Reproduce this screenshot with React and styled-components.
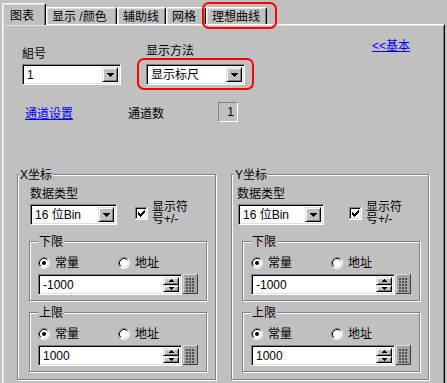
import React from 'react';
import styled, { createGlobalStyle } from 'styled-components';

const GlobalStyle = createGlobalStyle`
  html, body { margin: 0; padding: 0; background: #c0c0c0; }
  body {
    font-family: "Liberation Sans", "Noto Sans CJK SC", sans-serif;
    font-size: 12px;
    color: #000;
  }
`;

const Screen = styled.div`
  box-sizing: border-box;
  width: 447px;
  height: 383px;
  overflow: hidden;
  background: #c0c0c0;
  padding: 3px 0 0 2px;
`;

const TabStrip = styled.div`
  display: flex;
  align-items: flex-end;
  height: 21px;
  position: relative;
  z-index: 1;
`;

const Tab = styled.div`
  position: relative;
  box-sizing: border-box;
  flex: none;
  width: ${p => p.$w}px;
  height: ${p => (p.$active ? 22 : 17)}px;
  margin-bottom: ${p => (p.$active ? -1 : 0)}px;
  padding: ${p => (p.$active ? '5px 0 0 7px' : '2px 0 0 5px')};
  background: #c0c0c0;
  border: 1px solid #fff;
  border-bottom: none;
  border-right-color: #000;
  border-radius: 2px 2px 0 0;
  box-shadow: inset 1px 1px 0 #dfdfdf, inset -1px 0 0 #808080;
  line-height: 14px;
  white-space: nowrap;
`;

const RedMark = styled.div`
  position: absolute;
  top: ${p => p.$t}px;
  left: ${p => p.$l}px;
  right: ${p => p.$r}px;
  bottom: ${p => p.$b}px;
  border: 2px solid #ff0000;
  border-radius: 7px;
  pointer-events: none;
`;

const Panel = styled.div`
  box-sizing: border-box;
  width: 443px;
  height: 380px;
  border-top: 1px solid #fff;
  border-left: 1px solid #fff;
  border-right: 1px solid #000;
  box-shadow: inset 1px 1px 0 #dfdfdf, inset -1px 0 0 #808080;
`;

const TopRow = styled.div`
  display: grid;
  grid-template-columns: 124px 226px auto;
  align-items: start;
  padding-left: 19px;
`;

const Column = styled.div`
  display: flex;
  flex-direction: column;
  align-items: flex-start;
  margin-top: ${p => p.$top}px;
  gap: ${p => p.$gap}px;
`;

const Label = styled.div`
  line-height: 14px;
  white-space: nowrap;
`;

const LinkText = styled.a`
  color: #0000ff;
  text-decoration: underline;
  line-height: 14px;
  margin-top: ${p => p.$top || 0}px;
  white-space: nowrap;
  cursor: pointer;
`;

const ChannelRow = styled.div`
  display: grid;
  grid-template-columns: 103px 90px 20px;
  align-items: start;
  padding-left: 22px;
  margin-top: 17px;
`;

const TextCell = styled.div`
  margin-top: 5px;
  line-height: 14px;
`;

const CountBox = styled.div`
  box-sizing: border-box;
  width: 20px;
  height: 20px;
  border: 1px solid;
  border-color: #808080 #fff #fff #808080;
  text-align: right;
  padding-right: 3px;
  line-height: 18px;
`;

const Field = styled.div`
  position: relative;
  box-sizing: border-box;
  display: flex;
  width: ${p => p.$w}px;
  height: 21px;
  background: #fff;
  border: 1px solid;
  border-color: #808080 #fff #fff #808080;
  box-shadow: inset 1px 1px 0 #000, inset -1px -1px 0 #dfdfdf;
  padding: 2px;
  margin-left: ${p => p.$shift || 0}px;
`;

const FieldText = styled.div`
  flex: 1;
  padding-left: 2px;
  line-height: 17px;
  white-space: nowrap;
  overflow: hidden;
`;

const RaisedBtn = styled.div`
  box-sizing: border-box;
  flex: none;
  width: 16px;
  background: #c0c0c0;
  border: 1px solid;
  border-color: #dfdfdf #000 #000 #dfdfdf;
  box-shadow: inset 1px 1px 0 #fff, inset -1px -1px 0 #808080;
  display: flex;
  align-items: center;
  justify-content: center;
`;

const SpinCol = styled.div`
  display: flex;
  flex-direction: column;
  width: 16px;
  & > div { flex: 1; width: 16px; }
`;

const GroupsRow = styled.div`
  display: flex;
  align-items: flex-start;
  gap: 15px;
  padding-left: 14px;
  margin-top: 52px;
`;

const GroupBox = styled.div`
  position: relative;
  box-sizing: border-box;
  width: ${p => p.$w}px;
  margin: ${p => p.$mt || 0}px 0 0 ${p => p.$shift || 0}px;
  padding: ${p => p.$pad};
  border: 1px solid #808080;
  box-shadow: inset 1px 1px 0 #fff, 1px 1px 0 #fff;
`;

const Legend = styled.div`
  position: absolute;
  top: -7px;
  left: ${p => p.$left}px;
  padding: 2px 1px 0;
  line-height: 11px;
  background: #c0c0c0;
  white-space: nowrap;
`;

const TypeRow = styled.div`
  display: flex;
  align-items: flex-end;
`;

const CheckWrap = styled.div`
  display: flex;
  align-items: center;
  gap: 4px;
  margin-left: ${p => p.$gap}px;
`;

const CheckLabel = styled.div`
  line-height: 12px;
`;

const RadioRow = styled.div`
  display: grid;
  grid-template-columns: 80px auto;
  height: 12px;
  margin-bottom: 5px;
`;

const RadioItem = styled.div`
  display: flex;
  align-items: center;
  gap: 5px;
  line-height: 12px;
`;

const InputRow = styled.div`
  display: flex;
  gap: 1px;
`;

const DropArrow = () => (
  <svg width="7" height="4" shapeRendering="crispEdges">
    <path d="M0 0h7v1H0z M1 1h5v1H1z M2 2h3v1H2z M3 3h1v1H3z" fill="#000" />
  </svg>
);

const SmallArrow = ({ up }) => (
  <svg width="5" height="3" shapeRendering="crispEdges">
    {up ? (
      <path d="M2 0h1v1H2z M1 1h3v1H1z M0 2h5v1H0z" fill="#000" />
    ) : (
      <path d="M0 0h5v1H0z M1 1h3v1H1z M2 2h1v1H2z" fill="#000" />
    )}
  </svg>
);

const CheckBox = () => (
  <svg width="13" height="13" shapeRendering="crispEdges">
    <rect x="0" y="0" width="13" height="13" fill="#fff" />
    <path d="M0 0h12v1H1v11H0z" fill="#808080" />
    <path d="M1 1h10v1H2v9H1z" fill="#000" />
    <path d="M12 0h1v13H0v-1h12z" fill="#fff" />
    <path d="M11 1h1v11H1v-1h10z" fill="#dfdfdf" />
    <g transform="translate(3 3)">
      <path
        d="M6 0h1v1H6z M5 1h2v1H5z M0 2h1v1H0z M4 2h3v1H4z M0 3h2v1H0z M3 3h3v1H3z M0 4h5v1H0z M1 5h3v1H1z M2 6h1v1H2z"
        fill="#000"
      />
    </g>
  </svg>
);

const Radio = ({ checked }) => (
  <svg width="12" height="12">
    <circle cx="6" cy="6" r="5" fill="#fff" />
    <path d="M2.11 9.89 A5.5 5.5 0 0 1 9.89 2.11" stroke="#808080" fill="none" />
    <path d="M9.89 2.11 A5.5 5.5 0 0 1 2.11 9.89" stroke="#fff" fill="none" />
    <path d="M2.82 9.18 A4.5 4.5 0 0 1 9.18 2.82" stroke="#000" fill="none" />
    <path d="M9.18 2.82 A4.5 4.5 0 0 1 2.82 9.18" stroke="#dfdfdf" fill="none" />
    {checked && <circle cx="6" cy="6" r="2" fill="#000" />}
  </svg>
);

const CalcIcon = () => (
  <svg width="15" height="20" shapeRendering="crispEdges">
    <rect x="0" y="0" width="15" height="20" fill="#a4a4a4" />
    <rect x="0" y="0" width="1" height="20" fill="#c8c8e8" />
    <rect x="0" y="0" width="15" height="1" fill="#d8d8e8" />
    <rect x="14" y="0" width="1" height="20" fill="#404040" />
    <rect x="0" y="19" width="15" height="1" fill="#404040" />
    {[0, 1, 2, 3, 4].map(r =>
      [0, 1, 2].map(c => (
        <rect key={`${r}-${c}`} x={3 + c * 3} y={4 + r * 3} width="2" height="2" fill="#505050" />
      ))
    )}
  </svg>
);

const Select = ({ w, value, shift, children }) => (
  <Field $w={w} $shift={shift}>
    <FieldText>{value}</FieldText>
    <RaisedBtn>
      <DropArrow />
    </RaisedBtn>
    {children}
  </Field>
);

const NumberInput = ({ value, w }) => (
  <InputRow>
    <Field $w={w}>
      <FieldText>{value}</FieldText>
      <SpinCol>
        <RaisedBtn>
          <SmallArrow up />
        </RaisedBtn>
        <RaisedBtn>
          <SmallArrow />
        </RaisedBtn>
      </SpinCol>
    </Field>
    <CalcIcon />
  </InputRow>
);

const LimitGroup = ({ title, value, shift, mt, w }) => (
  <GroupBox $w={178} $shift={shift} $mt={mt} $pad="15px 8px 5px 8px">
    <Legend $left={8}>{title}</Legend>
    <RadioRow>
      <RadioItem>
        <Radio checked />
        常量
      </RadioItem>
      <RadioItem>
        <Radio />
        地址
      </RadioItem>
    </RadioRow>
    <NumberInput value={value} w={w} />
  </GroupBox>
);

const AxisGroup = ({ title, cfg }) => (
  <GroupBox $w={cfg.w} $pad={`12px 8px 7px ${cfg.pad}px`}>
    <Legend $left={cfg.legendLeft}>{title}</Legend>
    <Label>数据类型</Label>
    <TypeRow>
      <Select w={cfg.selW} value="16 位Bin" shift={cfg.selShift} />
      <CheckWrap $gap={cfg.checkGap}>
        <CheckBox />
        <CheckLabel>
          显示符
          <br />号+/-
        </CheckLabel>
      </CheckWrap>
    </TypeRow>
    <LimitGroup title="下限" value="-1000" shift={cfg.innerShift} mt={16} w={cfg.inW} />
    <LimitGroup title="上限" value="1000" shift={cfg.innerShift} mt={11} w={cfg.inW} />
  </GroupBox>
);

const X_CFG = { w: 199, pad: 12, legendLeft: 1, selW: 87, selShift: 0, checkGap: 18, innerShift: -1, inW: 145 };
const Y_CFG = { w: 198, pad: 5, legendLeft: 2, selW: 86, selShift: 1, checkGap: 25, innerShift: 5, inW: 144 };

export default function App() {
  return (
    <>
      <GlobalStyle />
      <Screen>
        <TabStrip>
          <Tab $w={44} $active>图表</Tab>
          <Tab $w={71}>显示 /颜色</Tab>
          <Tab $w={49}>辅助线</Tab>
          <Tab $w={40}>网格</Tab>
          <Tab $w={61}>
            理想曲线
            <RedMark $t={-6} $l={-5} $r={-11} $b={-5} />
          </Tab>
        </TabStrip>
        <Panel>
          <TopRow>
            <Column $top={22} $gap={3}>
              <Label>組号</Label>
              <Select w={99} value="1" />
            </Column>
            <Column $top={19} $gap={6}>
              <Label>显示方法</Label>
              <Select w={99} value="显示标尺">
                <RedMark $t={-7} $l={-10} $r={-10} $b={-6} />
              </Select>
            </Column>
            <LinkText $top={14}>{'<<基本'}</LinkText>
          </TopRow>
          <ChannelRow>
            <TextCell>
              <LinkText>通道设置</LinkText>
            </TextCell>
            <TextCell>通道数</TextCell>
            <CountBox>1</CountBox>
          </ChannelRow>
          <GroupsRow>
            <AxisGroup title="X坐标" cfg={X_CFG} />
            <AxisGroup title="Y坐标" cfg={Y_CFG} />
          </GroupsRow>
        </Panel>
      </Screen>
    </>
  );
}
